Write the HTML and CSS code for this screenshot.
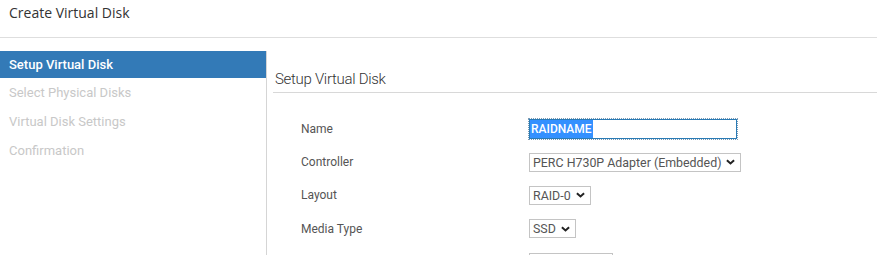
FILE: index.html
```html
<!DOCTYPE html>
<html>
<head>
<meta charset="utf-8">
<link rel="stylesheet" href="styles.css">
</head>
<body>
<div class="header">Create Virtual Disk</div>
<div class="wizard">
  <div class="nav">
    <div class="nav-item active">Setup Virtual Disk</div>
    <div class="nav-item">Select Physical Disks</div>
    <div class="nav-item">Virtual Disk Settings</div>
    <div class="nav-item">Confirmation</div>
  </div>
  <div class="main">
    <div class="title">Setup Virtual Disk</div>
    <div class="form">
      <div class="row">
        <div class="label">Name</div>
        <div class="input w-name"><span class="sel">RAIDNAME</span></div>
      </div>
      <div class="row">
        <div class="label">Controller</div>
        <div class="select w-ctrl"><span>PERC H730P Adapter (Embedded)</span><svg class="chev" viewBox="0 0 10 6" width="9" height="6"><path d="M1 1 L5 4.6 L9 1" fill="none" stroke="#222" stroke-width="2.2"/></svg></div>
      </div>
      <div class="row">
        <div class="label">Layout</div>
        <div class="select w-raid"><span>RAID-0</span><svg class="chev" viewBox="0 0 10 6" width="9" height="6"><path d="M1 1 L5 4.6 L9 1" fill="none" stroke="#222" stroke-width="2.2"/></svg></div>
      </div>
      <div class="row">
        <div class="label">Media Type</div>
        <div class="select w-ssd"><span>SSD</span><svg class="chev" viewBox="0 0 10 6" width="9" height="6"><path d="M1 1 L5 4.6 L9 1" fill="none" stroke="#222" stroke-width="2.2"/></svg></div>
      </div>
      <div class="row">
        <div class="label"></div>
        <div class="select w-next"></div>
      </div>
    </div>
  </div>
</div>
</body>
</html>
```
FILE: styles.css
```css
html, body {
  margin: 0;
  padding: 0;
  background: #fff;
  overflow: hidden;
  height: 255px;
}
body {
  font-family: Roboto, "Liberation Sans", sans-serif;
  color: #555;
}
.header {
  height: 38px;
  box-sizing: border-box;
  padding: 5px 0 0 9px;
  font-family: "Open Sans", Roboto, sans-serif;
  font-size: 14px;
  color: #333;
  border-bottom: 1px solid #dedede;
  line-height: 16px;
}
.wizard {
  display: flex;
  margin-top: 13px;
  height: 204px;
  overflow: hidden;
}
.nav {
  width: 266px;
  flex: none;
  border-right: 1px solid #d5d5d5;
}
.nav-item {
  height: 29px;
  line-height: 29px;
  padding-left: 9px;
  font-size: 13px;
  color: #c8c8c8;
}
.nav-item.active {
  height: 27px;
  line-height: 27px;
  background: #337ab7;
  color: #fff;
  font-weight: 500;
}
.main {
  flex: 1;
  padding-left: 6px;
}
.title {
  height: 42px;
  box-sizing: border-box;
  padding: 19px 0 0 2px;
  font-size: 15px;
  font-weight: 300;
  letter-spacing: -0.3px;
  line-height: 18px;
  color: #333;
  border-bottom: 1px solid #d8d8d8;
}
.form {
  padding: 19px 0 0 28px;
}
.row {
  display: flex;
  align-items: center;
  height: 33.4px;
}
.label {
  width: 228px;
  flex: none;
  font-size: 12px;
  color: #555;
}
.input {
  box-sizing: border-box;
  height: 20px;
  border: 1px solid #2a7bb5;
  outline: 1px dotted #7a9ab5;
  display: flex;
  align-items: stretch;
  font-size: 12px;
}
.sel {
  background: #3390ff;
  color: #fff;
  font-weight: 500;
  line-height: 18px;
  padding: 0 1px 0 1px;
}
.w-name { width: 208px; }
.select {
  box-sizing: border-box;
  height: 19px;
  border: 1px solid #c4c4c4;
  display: flex;
  align-items: center;
  gap: 5px;
  padding: 0 3px 0 3px;
  font-size: 12.4px;
  color: #555;
}
.chev { flex: none; }
.w-ctrl { width: 212px; }
.w-raid { width: 62px; }
.w-ssd { width: 47px; }
.w-next { width: 84px; }
```
